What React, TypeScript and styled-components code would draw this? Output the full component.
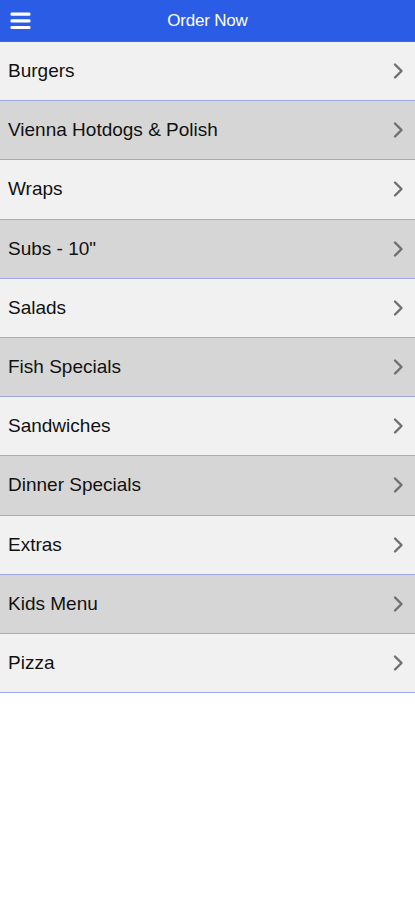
import React from "react";
import styled, { createGlobalStyle } from "styled-components";

const Global = createGlobalStyle`
  html, body { margin: 0; padding: 0; background: #ffffff; }
  body { font-family: "Liberation Sans", Arial, Helvetica, sans-serif; }
  * { box-sizing: border-box; }
`;

const Page = styled.div`
  width: 415px;
  min-height: 900px;
  background: #ffffff;
  display: flex;
  flex-direction: column;
`;

const Header = styled.header`
  height: 42px;
  background: #2b5ce6;
  display: grid;
  grid-template-columns: 44px 1fr 44px;
  align-items: center;
  border-bottom: 1px solid #3f6ae0;
`;

const MenuButton = styled.button`
  width: 44px;
  height: 40px;
  border: 0;
  background: transparent;
  padding: 0 0 0 10px;
  display: flex;
  align-items: center;
  justify-content: flex-start;
  cursor: pointer;
`;

const Title = styled.h1`
  margin: 0;
  text-align: center;
  color: #ffffff;
  font-size: 17px;
  font-weight: 400;
  letter-spacing: -0.2px;
`;

const List = styled.ul`
  list-style: none;
  margin: 0;
  padding: 0;
`;

const Row = styled.li<{ $alt: boolean }>`
  height: 59.2px;
  background: ${(p) => (p.$alt ? "#d6d6d6" : "#f1f1f1")};
  border-bottom: 1.5px solid #9ea8e6;
  display: flex;
  align-items: center;
  justify-content: space-between;
  padding: 0 10px 0 8px;
`;

const Label = styled.span`
  font-size: 19px;
  color: #111111;
`;

const Chevron = () => (
  <svg width="14" height="18" viewBox="0 0 14 18" aria-hidden="true">
    <path d="M4 2.5 L10.5 9 L4 15.5" fill="none" stroke="#707070" strokeWidth="2.4" strokeLinecap="round" strokeLinejoin="round" />
  </svg>
);

const Hamburger = () => (
  <svg width="22" height="20" viewBox="0 0 22 20" aria-hidden="true">
    <rect x="0.5" y="1.5" width="20" height="3.2" rx="1.2" fill="#ffffff" />
    <rect x="0.5" y="8.2" width="20" height="3.2" rx="1.2" fill="#ffffff" />
    <rect x="0.5" y="14.9" width="20" height="3.2" rx="1.2" fill="#ffffff" />
  </svg>
);

const items = [
  "Burgers",
  "Vienna Hotdogs & Polish",
  "Wraps",
  'Subs - 10"',
  "Salads",
  "Fish Specials",
  "Sandwiches",
  "Dinner Specials",
  "Extras",
  "Kids Menu",
  "Pizza",
];

export default function App() {
  return (
    <Page>
      <Global />
      <Header>
        <MenuButton aria-label="Menu">
          <Hamburger />
        </MenuButton>
        <Title>Order Now</Title>
        <span />
      </Header>
      <List>
        {items.map((name, i) => (
          <Row key={name} $alt={i % 2 === 1}>
            <Label>{name}</Label>
            <Chevron />
          </Row>
        ))}
      </List>
    </Page>
  );
}
